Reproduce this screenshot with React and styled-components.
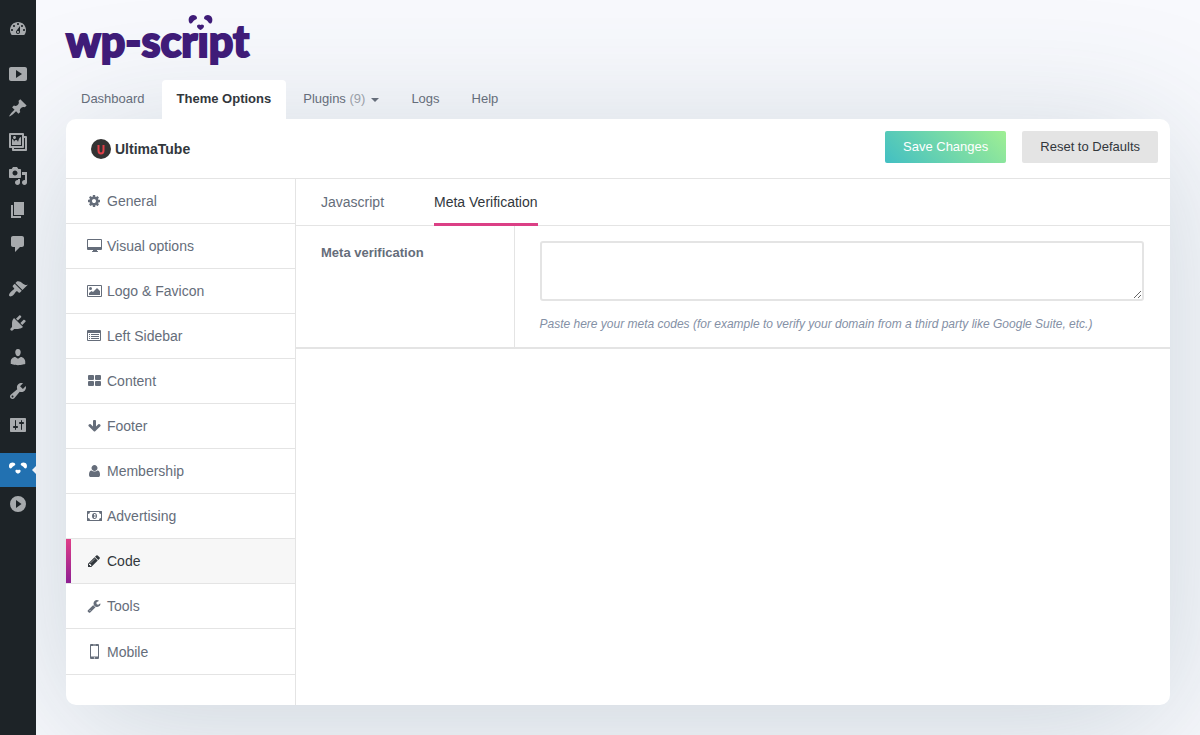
import React, { useState } from "react";
import styled, { createGlobalStyle, css } from "styled-components";

const Global = createGlobalStyle`
  * { box-sizing: border-box; }
  html, body { margin: 0; min-height: 100vh; }
  body {
    background: #f8f9fd;
    color: #656d7a;
    font-family: "Liberation Sans", Arial, sans-serif;
    font-size: 13px;
  }
  a { color: inherit; text-decoration: none; }
`;

const LINE = "#e4e4e4";

const Shell = styled.div`
  display: flex;
  min-height: 100vh;
  overflow: hidden;
`;

const AdminMenu = styled.nav`
  flex: none;
  width: 36px;
  padding-top: 12px;
  background: #1d2327;
  z-index: 1;
`;

const AdminLink = styled.a`
  position: relative;
  display: flex;
  align-items: center;
  justify-content: center;
  height: 34px;
  margin-top: ${(p) => (p.$spaced ? "11px" : "0")};
  color: ${(p) => (p.$active ? "#fff" : "#a7aaad")};
  background: ${(p) => (p.$active ? "#2271b1" : "transparent")};
  ${(p) =>
    p.$active &&
    css`
      &::after {
        content: "";
        position: absolute;
        right: 0;
        top: 13px;
        border: 4px solid transparent;
        border-left: 0;
        border-right-color: #f0f1f5;
      }
    `}
  svg { width: 20px; height: 20px; fill: currentColor; }
`;

const Page = styled.div`
  flex: 1;
  min-width: 0;
  padding: 15px 30px 30px;
`;

const Logo = styled.a`
  position: relative;
  display: block;
  width: 184px;
  height: 50px;
  margin-bottom: 15px;
  color: #3f1c78;
  font: 900 43px/52px Lato, "Open Sans", sans-serif;
  -webkit-text-stroke: 2px currentColor;
  white-space: nowrap;
`;

const PandaMark = styled.svg`
  position: absolute;
  left: 122px;
  top: 0;
  width: 26px;
  height: 16px;
  fill: currentColor;
`;

const MainTabs = styled.nav`
  display: flex;
  height: 39px;
`;

const MainTab = styled.a`
  display: flex;
  align-items: center;
  padding: 0 15px 2px;
  margin-right: 2px;
  border-radius: 4px 4px 0 0;
  white-space: pre;
  position: relative;
  z-index: 1;
  ${(p) =>
    p.$active &&
    css`
      background: #fff;
      color: #32373c;
      font-weight: bold;
    `}
`;

const Count = styled.span`
  color: #9a9fa8;
`;

const Caret = styled.span`
  margin: 3px 0 0 6px;
  border: 4px solid transparent;
  border-top-color: currentColor;
  border-bottom: 0;
`;

const Panel = styled.main`
  border-radius: 10px;
  background: #fff;
  box-shadow: 0 20px 140px rgba(50, 85, 100, 0.22);
`;

const PanelHeader = styled.header`
  display: flex;
  align-items: center;
  height: 60px;
  padding: 0 12px 0 25px;
  border-bottom: 1px solid ${LINE};
`;

const ProductName = styled.h1`
  display: flex;
  align-items: center;
  gap: 4px;
  margin: 0;
  color: #32373c;
  font-size: 14px;
  line-height: 20px;
`;

const Actions = styled.div`
  display: flex;
  gap: 16px;
  margin: 0 0 4px auto;
`;

const Button = styled.button`
  height: 32px;
  padding: 0 18px;
  border: 0;
  border-radius: 2px;
  font: inherit;
  cursor: pointer;
  color: ${(p) => (p.$primary ? "#fff" : "#32373c")};
  background: ${(p) =>
    p.$primary ? "linear-gradient(45deg, #42bfc3, #9fef93)" : "#e4e4e4"};
`;

const Body = styled.div`
  display: flex;
`;

const SideNav = styled.nav`
  flex: none;
  width: 230px;
  padding-bottom: 30px;
  border-right: 1px solid ${LINE};
`;

const SideLink = styled.a`
  display: flex;
  align-items: center;
  gap: 4px;
  padding: 12px 21px;
  border-bottom: 1px solid ${LINE};
  font-size: 14px;
  line-height: 20px;
  svg { width: 16px; height: 16px; fill: currentColor; flex: none; }
  &:last-child { padding-top: 13px; }
  ${(p) =>
    p.$active &&
    css`
      background: linear-gradient(#e03e88, #8e1f93) left / 5px 100% no-repeat padding-box #f7f7f7;
      color: #32373c;
    `}
`;

const Content = styled.section`
  flex: 1;
  min-width: 0;
`;

const SubTabs = styled.nav`
  display: flex;
  gap: 50px;
  height: 47px;
  padding: 0 25px;
  border-bottom: 1px solid ${LINE};
`;

const SubTab = styled.a`
  height: 47px;
  font-size: 14px;
  line-height: 46px;
  ${(p) =>
    p.$active &&
    css`
      color: #32373c;
      box-shadow: inset 0 -3px #db3f85;
    `}
`;

const Field = styled.div`
  display: flex;
  border-bottom: 2px solid ${LINE};
`;

const FieldLabel = styled.label`
  flex: 0 0 25%;
  padding: 17px 25px;
  border-right: 1px solid ${LINE};
  font-weight: bold;
  line-height: 20px;
`;

const FieldBody = styled.div`
  flex: 1;
  padding: 15px 26px 13px 25px;
`;

const TextArea = styled.textarea`
  display: block;
  width: 100%;
  height: 60px;
  padding: 6px;
  border: 2px solid ${LINE};
  border-radius: 3px;
  background: #fff;
  font: 14px/20px "Liberation Sans", Arial, sans-serif;
  outline: 0;
  resize: vertical;
`;

const Help = styled.p`
  margin: 13px 0 0;
  color: #8490a5;
  font-size: 12px;
  font-style: italic;
  line-height: 20px;
`;

const adminItems = [
  ["Dashboard", "M3.76 16h12.48c1.1-1.37 1.76-3.11 1.76-5 0-4.42-3.58-8-8-8s-8 3.58-8 8c0 1.89.66 3.63 1.76 5zM10 4c.55 0 1 .45 1 1s-.45 1-1 1-1-.45-1-1 .45-1 1-1zM6 6c.55 0 1 .45 1 1s-.45 1-1 1-1-.45-1-1 .45-1 1-1zm8 0c.55 0 1 .45 1 1s-.45 1-1 1-1-.45-1-1 .45-1 1-1zm-5.37 5.55L12 7v6c0 1.1-.9 2-2 2s-2-.9-2-2c0-.57.24-1.08.63-1.45zM4 10c.55 0 1 .45 1 1s-.45 1-1 1-1-.45-1-1 .45-1 1-1zm12 0c.55 0 1 .45 1 1s-.45 1-1 1-1-.45-1-1 .45-1 1-1zm-5 3c0-.55-.45-1-1-1s-1 .45-1 1 .45 1 1 1 1-.45 1-1z"],
  ["Videos", "M19 15V5c0-1.1-.9-2-2-2H3c-1.1 0-2 .9-2 2v10c0 1.1.9 2 2 2h14c1.1 0 2-.9 2-2zM8 14V6l6 4z", true],
  ["Posts", "M10.44 3.02l1.82-1.82 6.36 6.35-1.83 1.82c-1.05-.68-2.48-.57-3.41.36l-.75.75c-.92.93-1.04 2.35-.35 3.41l-1.83 1.82-2.41-2.41-2.8 2.79c-.42.42-3.38 2.71-3.8 2.29s1.86-3.39 2.28-3.81l2.79-2.79L4.1 9.36l1.83-1.82c1.05.69 2.48.57 3.4-.36l.75-.75c.93-.92 1.05-2.35.36-3.41z"],
  ["Galleries", "M16 4h1.96c.57 0 1.04.47 1.04 1.04v12.92c0 .57-.47 1.04-1.04 1.04H5.04C4.47 19 4 18.53 4 17.96V16H2.04C1.47 16 1 15.53 1 14.96V2.04C1 1.47 1.47 1 2.04 1h12.92c.57 0 1.04.47 1.04 1.04V4zM3 14h11V3H3v11zm5-8.5C8 4.67 7.33 4 6.5 4S5 4.67 5 5.5 5.67 7 6.5 7 8 6.33 8 5.5zm2 4.5s1-5 3-5v8H4V7c2 0 2 3 2 3s.33-2 2-2 2 2 2 2zm7 7V6h-1v8.96c0 .57-.47 1.04-1.04 1.04H6v1h11z"],
  ["Media", "M13 11V4c0-.55-.45-1-1-1h-1.67L9 1H5L3.67 3H2c-.55 0-1 .45-1 1v7c0 .55.45 1 1 1h10c.55 0 1-.45 1-1zM7 4.5c1.38 0 2.5 1.12 2.5 2.5S8.38 9.5 7 9.5 4.5 8.38 4.5 7 5.62 4.5 7 4.5zM14 6h5v10.5c0 1.38-1.12 2.5-2.5 2.5S14 17.88 14 16.5s1.12-2.5 2.5-2.5c.17 0 .34.02.5.05V9h-3V6zm-4 8.05V13h2v3.5c0 1.38-1.12 2.5-2.5 2.5S7 17.88 7 16.5 8.12 14 9.5 14c.17 0 .34.02.5.05z"],
  ["Pages", "M6 15V2h10v13H6zm-1 1h8v2H3V5h2v11z"],
  ["Comments", "M5 2h9c1.1 0 2 .9 2 2v7c0 1.1-.9 2-2 2h-2l-5 5v-5H5c-1.1 0-2-.9-2-2V4c0-1.1.9-2 2-2z"],
  ["Appearance", "M14.48 11.06L7.41 3.99l1.5-1.5c.5-.56 2.3-.47 3.51.32 1.21.8 1.43 1.28 2.91 2.1 1.18.64 2.45 1.26 4.45.85zm-.71.71L6.7 4.7 4.93 6.47c-.39.39-.39 1.02 0 1.41l1.06 1.06c.39.39.39 1.03 0 1.42-.6.6-1.43 1.11-2.21 1.69-.35.26-.7.53-1.01.84C1.43 14.23.4 16.08 1.4 17.07c.99 1 2.84-.03 4.18-1.36.31-.31.58-.66.85-1.02.57-.78 1.08-1.61 1.69-2.21.39-.39 1.02-.39 1.41 0l1.06 1.06c.39.39 1.02.39 1.41 0z", true],
  ["Plugins", "M13.11 4.36L9.87 7.6 8 5.73l3.24-3.24c.35-.34 1.05-.2 1.56.32.52.51.66 1.21.31 1.55zm-8 1.77l.91-1.12 9.01 9.01-1.19.84c-.71.71-2.63 1.16-3.82 1.16H6.14L4.9 17.26c-.59.59-1.54.59-2.12 0-.59-.58-.59-1.53 0-2.12l1.24-1.24v-3.88c0-1.13.4-3.19 1.09-3.89zm7.26 3.97l3.24-3.24c.34-.35 1.04-.21 1.55.31.52.51.66 1.21.31 1.55l-3.24 3.25z"],
  ["Users", "M10 9.25c-2.27 0-2.73-3.44-2.73-3.44C7 4.02 7.82 2 9.97 2c2.16 0 2.98 2.02 2.71 3.81 0 0-.41 3.44-2.68 3.44zm0 2.57L12.72 10c2.39 0 4.52 2.33 4.52 4.53v2.49s-3.65 1.13-7.24 1.13c-3.65 0-7.24-1.13-7.24-1.13v-2.49c0-2.25 1.94-4.48 4.47-4.48z"],
  ["Tools", "M16.68 9.77c-1.34 1.34-3.3 1.67-4.95.99l-5.41 6.52c-.99.99-2.59.99-3.58 0s-.99-2.59 0-3.57l6.52-5.42c-.68-1.65-.35-3.61.99-4.95 1.28-1.28 3.12-1.62 4.72-1.06l-2.89 2.89 2.82 2.82 2.86-2.87c.53 1.58.18 3.39-1.08 4.65zM3.81 16.21c.4.39 1.04.39 1.43 0 .4-.4.4-1.04 0-1.43-.39-.4-1.03-.4-1.43 0-.39.39-.39 1.03 0 1.43z"],
  ["Settings", "M18 16V4c0-.55-.45-1-1-1H3c-.55 0-1 .45-1 1v12c0 .55.45 1 1 1h14c.55 0 1-.45 1-1zM8 11h1c.55 0 1 .45 1 1s-.45 1-1 1H8v1.5c0 .28-.22.5-.5.5s-.5-.22-.5-.5V13H6c-.55 0-1-.45-1-1s.45-1 1-1h1V5.5c0-.28.22-.5.5-.5s.5.22.5.5V11zm5-2h-1c-.55 0-1-.45-1-1s.45-1 1-1h1V5.500c0-.28.22-.5.5-.5s.5.22.5.5V7h1c.55 0 1 .45 1 1s-.45 1-1 1h-1v5.500c0 .28-.22.5-.5.5s-.5-.22-.5-.5V9z"],
  ["WP-Script", "M1.500 8C.2 5.500 1.500 2.500 4.500 2.500C6 2.500 7.300 3.200 7.300 4.600C7.300 5.600 6 5.600 5 6.600S3 9.300 1.500 8zM18.500 8C19.800 5.500 18.500 2.500 15.500 2.500C14 2.500 12.700 3.200 12.700 4.600C12.700 5.600 14 5.600 15 6.600S17 9.300 18.500 8zM10 13.700C8.800 13.200 7.400 12.200 7.400 10.900C7.400 9.700 9.200 9.500 10 10.200C10.800 9.500 12.600 9.700 12.600 10.900C12.600 12.200 11.200 13.200 10 13.700z", true, true],
  ["Player", "M10 2a8 8 0 1 0 0 16a8 8 0 1 0 0-16zM8 14V6l5.500 4z"],
];

const scaled = (d) => <path transform="translate(0 1) scale(.0078125)" d={d} />;

const sideItems = [
  ["General", scaled("M1152 896q0-106-75-181t-181-75-181 75-75 181 75 181 181 75 181-75 75-181zm512-109v222q0 12-8 23t-20 13l-185 28q-19 54-39 91 35 50 107 138 10 12 10 25t-9 23q-27 37-99 108t-94 71q-12 0-26-9l-138-108q-44 23-91 38-16 136-29 186-7 28-36 28h-222q-14 0-24.500-8.500t-11.500-21.500l-28-184q-49-16-90-37l-141 107q-10 9-25 9-14 0-25-11-126-114-165-168-7-10-7-23 0-12 8-23 15-21 51-66.500t54-70.500q-27-50-41-99l-183-27q-13-2-21-12.500t-8-23.500v-222q0-12 8-23t19-13l186-28q14-46 39-92-40-57-107-138-10-12-10-24 0-10 9-23 26-36 98.500-107.500t94.500-71.500q13 0 26 10l138 107q44-23 91-38 16-136 29-186 7-28 36-28h222q14 0 24.500 8.500t11.500 21.500l28 184q49 16 90 37l142-107q9-9 24-9 13 0 25 10 129 119 165 170 7 8 7 22 0 12-8 23-15 21-51 66.500t-54 70.500q26 50 41 98l183 28q13 2 21 12.500t8 23.500z")],
  ["Visual options", <path fillRule="evenodd" d="M1 1h13a1 1 0 0 1 1 1v9a1 1 0 0 1-1 1H10v1h.500a.5.500 0 0 1 .5.500v.5H5v-.5a.5.500 0 0 1 .5-.5H6v-1H1a1 1 0 0 1-1-1V2a1 1 0 0 1 1-1zm0 1v7h13V2z" />],
  ["Logo & Favicon", <path fillRule="evenodd" d="M1 2h13a1 1 0 0 1 1 1v10a1 1 0 0 1-1 1H1a1 1 0 0 1-1-1V3a1 1 0 0 1 1-1zm0 1v10h13V3zM3.500 4a1.500 1.500 0 1 1 0 3a1.500 1.500 0 1 1 0-3zM2 12v-2l2.500-2L6 9l4-4 3 3v4z" />],
  ["Left Sidebar", <path fillRule="evenodd" d="M1 2h12a1 1 0 0 1 1 1v9a1 1 0 0 1-1 1H1a1 1 0 0 1-1-1V3a1 1 0 0 1 1-1zm0 3v7h12V5zM2 6h1v1H2zM4 6h8v1H4zM2 8h1v1H2zM4 8h8v1H4zM2 10h1v1H2zM4 10h8v1H4z" />],
  ["Content", <path d="M2 2h4a1 1 0 0 1 1 1v3a1 1 0 0 1-1 1H2a1 1 0 0 1-1-1V3a1 1 0 0 1 1-1zM9 2h4a1 1 0 0 1 1 1v3a1 1 0 0 1-1 1H9a1 1 0 0 1-1-1V3a1 1 0 0 1 1-1zM2 8h4a1 1 0 0 1 1 1v3a1 1 0 0 1-1 1H2a1 1 0 0 1-1-1V9a1 1 0 0 1 1-1zM9 8h4a1 1 0 0 1 1 1v3a1 1 0 0 1-1 1H9a1 1 0 0 1-1-1V9a1 1 0 0 1 1-1z" />],
  ["Footer", scaled("M1739 832q0 53-37 90l-651 652q-39 37-91 37-53 0-90-37l-651-652q-38-36-38-90 0-53 38-91l74-75q39-37 91-37 53 0 90 37l294 294v-704q0-52 38-90t90-38h128q52 0 90 38t38 90v704l294-294q37-37 90-37 52 0 91 37l75 75q37 39 37 91z")],
  ["Membership", scaled("M1664 1399q0 109-62.500 187t-150.500 78h-982q-88 0-150.500-78t-62.500-187q0-85 8.500-160.500t31.500-152 58.500-131 94-89 134.500-34.500q131 128 377 128t377-128q76 0 134.500 34.500t94 89 58.500 131 31.500 152 8.500 160.500zm-320-887q0 159-112.500 271.500t-271.500 112.500-271.500-112.500-112.500-271.500 112.500-271.500 271.500-112.500 271.500 112.500 112.500 271.500z")],
  ["Advertising", <path fillRule="evenodd" d="M.5 3h14a.5.500 0 0 1 .5.500v9a.5.500 0 0 1-.5.500H.5a.5.500 0 0 1-.5-.5v-9A.5.500 0 0 1 .5 3zM3 4a2 2 0 0 1-2 2v4a2 2 0 0 1 2 2h9a2 2 0 0 1 2-2V6a2 2 0 0 1-2-2zM7.500 5C9 5 10 6.300 10 8S9 11 7.500 11 5 9.700 5 8 6 5 7.500 5zM7 6v1h.5v2H7v1h1.500V6z" />],
  ["Code", scaled("M491 1536l91-91-235-235-91 91v107h128v128h107zm523-928q0-22-22-22-10 0-17 7l-542 542q-7 7-7 17 0 22 22 22 10 0 17-7l542-542q7-7 7-17zm-54-192l416 416-832 832h-416v-416zm683 96q0 53-37 90l-166 166-416-416 166-165q36-38 90-38 53 0 91 38l235 234q37 39 37 91z")],
  ["Tools", scaled("M448 1472q0-26-19-45t-45-19-45 19-19 45 19 45 45 19 45-19 19-45zm644-420l-682 682q-37 37-90 37-52 0-91-37l-106-108q-38-36-38-90 0-53 38-91l681-681q39 98 114.500 173.500t173.500 114.500zm634-435q0 39-23 106-47 134-164.500 217.500t-258.500 83.500q-185 0-316.500-131.500t-131.500-316.500 131.500-316.500 316.500-131.500q58 0 121.500 16.500t107.500 46.500q16 11 16 28t-16 28l-293 169v224l193 107q5-3 79-48.500t135.500-81 70.500-35.500q15 0 23.500 10t8.500 25z")],
  ["Mobile", <path fillRule="evenodd" d="M4 0h7a1 1 0 0 1 1 1v13a1 1 0 0 1-1 1H4a1 1 0 0 1-1-1V1a1 1 0 0 1 1-1zm0 2v10.500h7V2zM6 .7v.6h3V.7zM7.500 13.200a.7.700 0 1 0 0 1.400a.7.700 0 1 0 0-1.400z" />],
];

export default function App() {
  const [codes, setCodes] = useState("");
  return (
    <>
      <Global />
      <Shell>
        <AdminMenu aria-label="Admin menu">
          {adminItems.map(([name, d, spaced, active]) => (
            <AdminLink key={name} href="#" aria-label={name} $spaced={spaced} $active={active}>
              <svg viewBox="0 0 20 20" aria-hidden="true">
                <path fillRule="evenodd" d={d} />
              </svg>
            </AdminLink>
          ))}
        </AdminMenu>

        <Page>
          <Logo href="#" aria-label="wp-script">
            wp-scrıpt
            <PandaMark viewBox="0 0 26 16" aria-hidden="true">
              <path d="M1.500 8C-.5 4.500 1 0 5 0c2 0 4 1 4 3 0 1.500-2 1.500-3.200 2.800S3.500 9.800 1.500 8zM23.500 8c2-3.500.5-8-3.500-8-2 0-4 1-4 3 0 1.500 2 1.500 3.200 2.800s2.300 4 4.300 2.200zM12.500 15c-2-1-3.500-2.300-3.500-3.800s2.200-2.500 3.500-1.200c1.300-1.300 3.500-.3 3.500 1.200s-1.500 2.800-3.500 3.800z" />
            </PandaMark>
          </Logo>

          <MainTabs aria-label="Sections">
            <MainTab href="#">Dashboard</MainTab>
            <MainTab href="#" $active>Theme Options</MainTab>
            <MainTab href="#">Plugins <Count>(9)</Count><Caret /></MainTab>
            <MainTab href="#">Logs</MainTab>
            <MainTab href="#">Help</MainTab>
          </MainTabs>

          <Panel>
            <PanelHeader>
              <ProductName>
                <svg width="20" height="20" viewBox="0 0 20 20" aria-hidden="true">
                  <circle cx="10" cy="10" r="10" fill="#333" />
                  <path d="M7.500 6v5.500a2.500 3 0 0 0 5 0V6" fill="none" stroke="#e04049" strokeWidth="2" />
                </svg>
                UltimaTube
              </ProductName>
              <Actions>
                <Button type="button" $primary>Save Changes</Button>
                <Button type="button">Reset to Defaults</Button>
              </Actions>
            </PanelHeader>

            <Body>
              <SideNav aria-label="Theme options">
                {sideItems.map(([name, icon]) => (
                  <SideLink key={name} href="#" $active={name === "Code"}>
                    <svg viewBox="0 0 16 16" aria-hidden="true">{icon}</svg>
                    {name}
                  </SideLink>
                ))}
              </SideNav>

              <Content>
                <SubTabs aria-label="Code options">
                  <SubTab href="#">Javascript</SubTab>
                  <SubTab href="#" $active>Meta Verification</SubTab>
                </SubTabs>
                <Field>
                  <FieldLabel htmlFor="meta-codes">Meta verification</FieldLabel>
                  <FieldBody>
                    <TextArea
                      id="meta-codes"
                      value={codes}
                      onChange={(e) => setCodes(e.target.value)}
                    />
                    <Help>
                      Paste here your meta codes (for example to verify your domain from a third
                      party like Google Suite, etc.)
                    </Help>
                  </FieldBody>
                </Field>
              </Content>
            </Body>
          </Panel>
        </Page>
      </Shell>
    </>
  );
}
